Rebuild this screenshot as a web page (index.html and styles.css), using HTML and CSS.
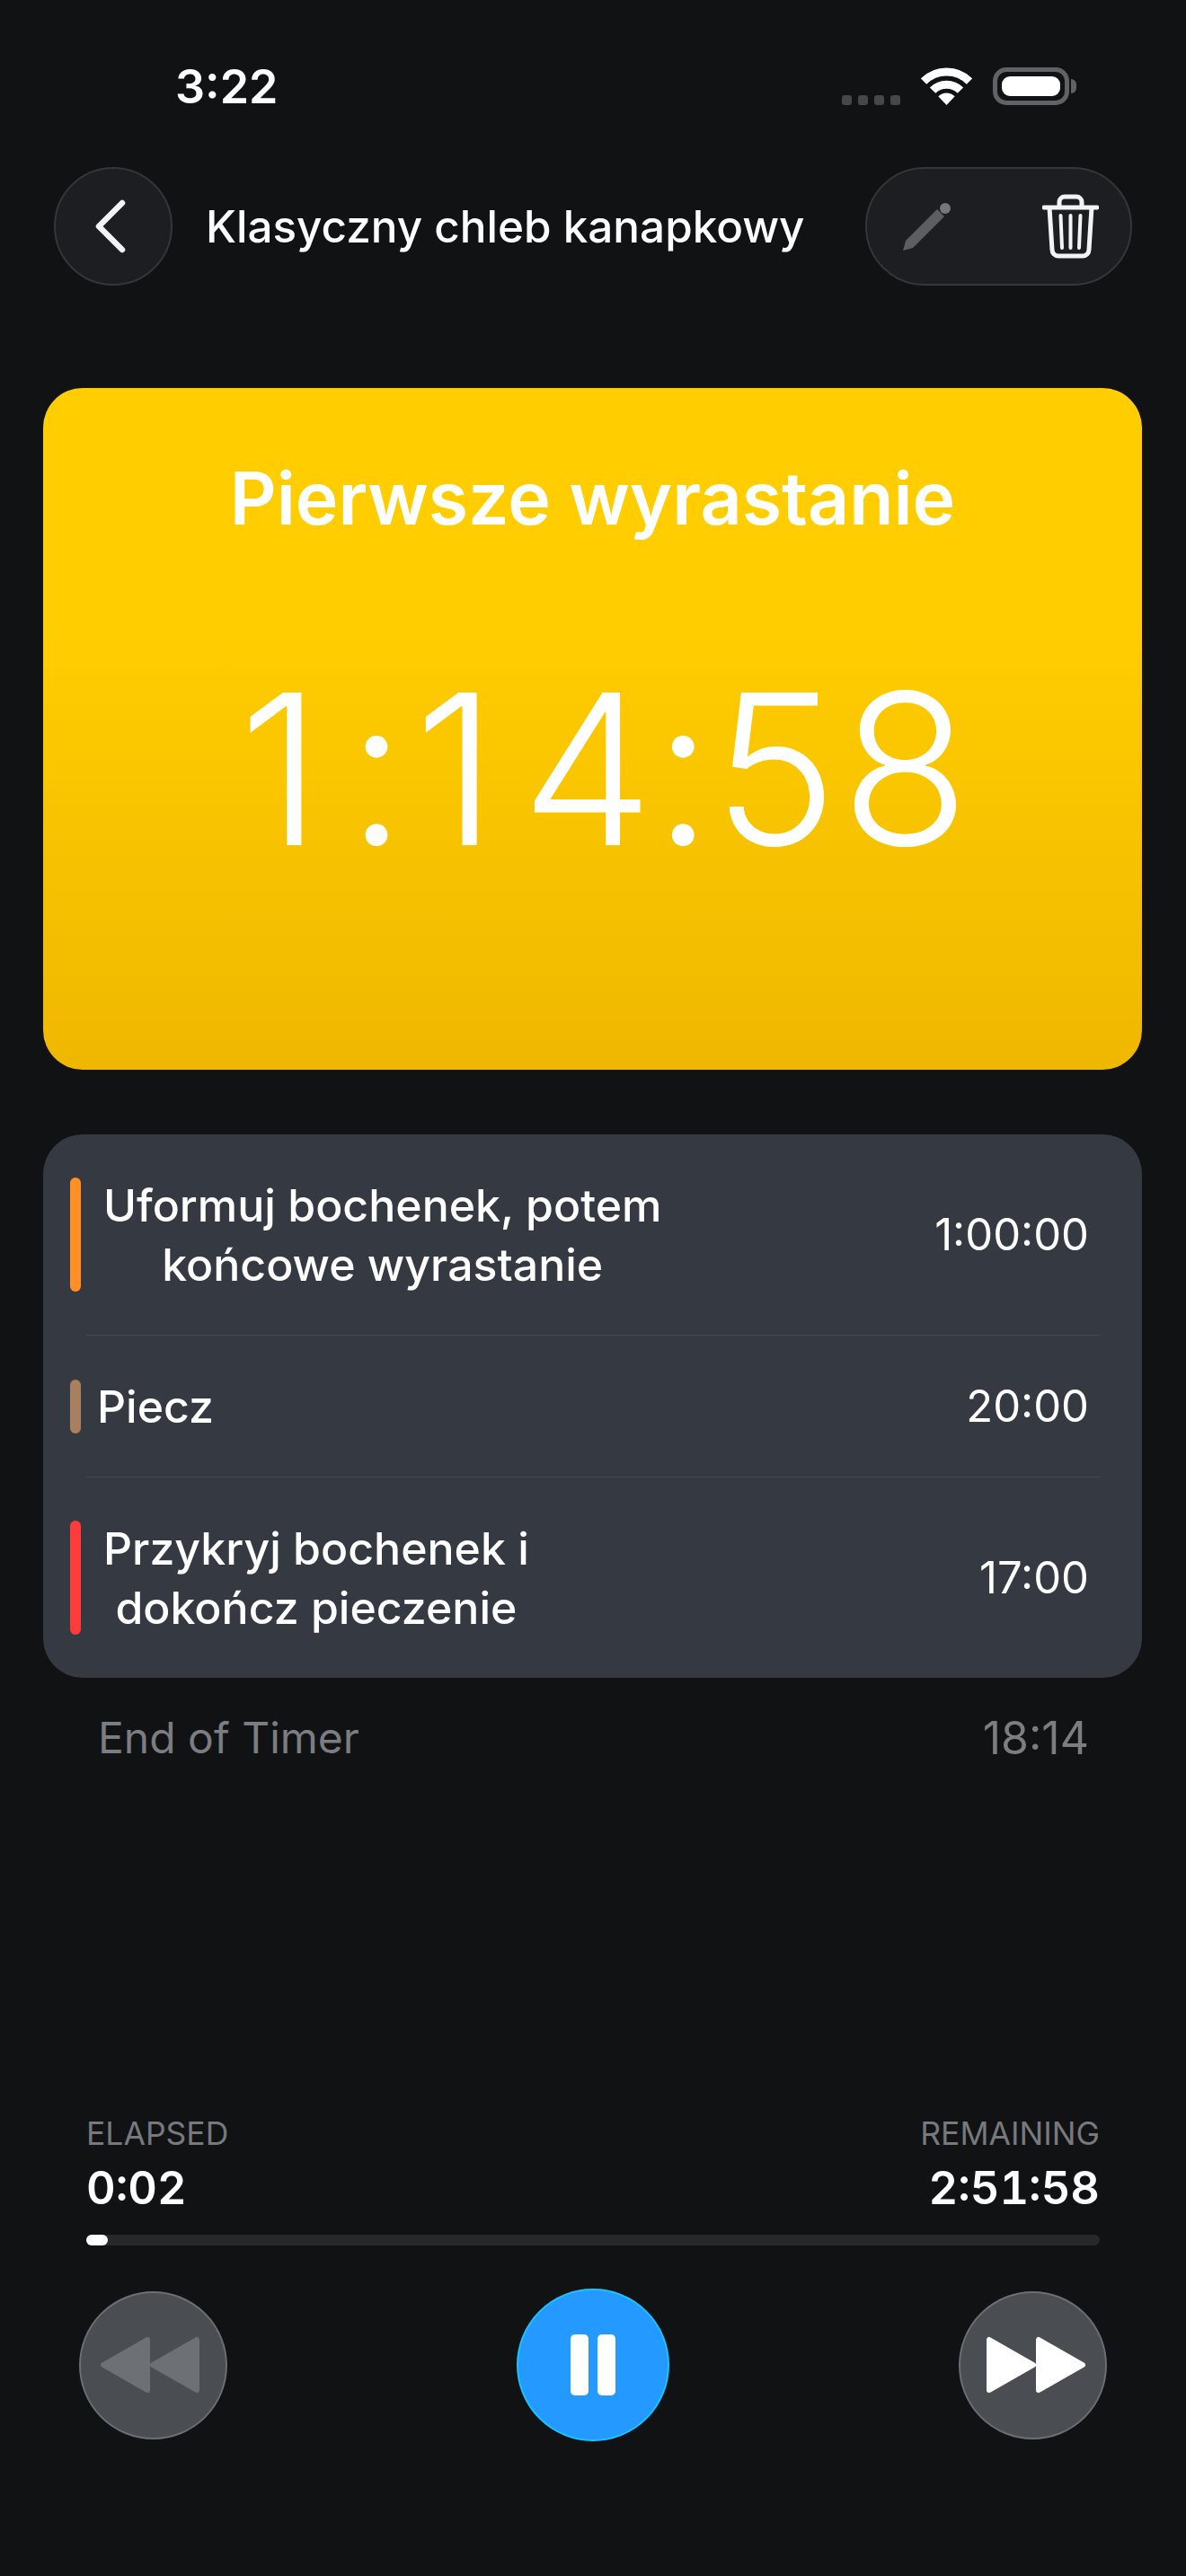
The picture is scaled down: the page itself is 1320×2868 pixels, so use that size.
FILE: index.html
```html
<!DOCTYPE html>
<html lang="pl">
  <head>
    <meta charset="UTF-8" />
    <meta name="viewport" content="width=device-width, initial-scale=1.0" />
    <title>Klasyczny chleb kanapkowy</title>
    <link rel="stylesheet" href="styles.css">
  </head>

  <body>
    <!-- Status bar -->
    <div class="status">
      <span class="clock">3:22</span>
      <div class="status-icons">
        <div class="signal"><span></span><span></span><span></span><span></span></div>
        <svg class="wifi" width="57" height="42" viewBox="0 0 57 42">
          <path d="M3 15.5A36 36 0 0 1 54 15.5M13.1 25.6A21.75 21.75 0 0 1 43.9 25.6" fill="none" stroke="#fff" stroke-width="9" />
          <path d="M28.5 42L19.3 32.3A13 13 0 0 1 37.7 32.3Z" fill="#fff" />
        </svg>
        <div class="battery"><div class="battery-fill"></div></div>
        <div class="battery-tip"></div>
      </div>
    </div>

    <!-- Top bar -->
    <header>
      <button class="back">
        <svg width="36" height="60" viewBox="0 0 36 60">
          <path d="M31 4L5 30L31 56" fill="none" stroke="#f2f3f5" stroke-width="6.5" stroke-linecap="round" stroke-linejoin="round" />
        </svg>
      </button>
      <h1>Klasyczny chleb kanapkowy</h1>
      <div class="actions">
        <svg width="53" height="53" viewBox="0 0 53 53">
          <path d="M0 53L3 42L38 7L46 15L11 50Z" fill="#5c5e61" />
          <circle cx="47" cy="6" r="6" fill="#757779" />
        </svg>
        <svg width="63" height="72" viewBox="0 0 63 72">
          <path d="M2 15H61" stroke="#f2f3f5" stroke-width="5" stroke-linecap="round" />
          <path d="M19 14V9a6 6 0 0 1 6-6H38a6 6 0 0 1 6 6V14" fill="none" stroke="#f2f3f5" stroke-width="5" />
          <path d="M8 15L11 62a7 7 0 0 0 7 7H45a7 7 0 0 0 7-7L55 15" fill="none" stroke="#f2f3f5" stroke-width="5" />
          <path d="M20.5 24L22 60M31.5 24V60M42.5 24L41 60" stroke="#f2f3f5" stroke-width="4" stroke-linecap="round" />
        </svg>
      </div>
    </header>

    <!-- Current step -->
    <section class="hero">
      <h2>Pierwsze wyrastanie</h2>
      <div class="countdown">
        <span>1</span><span>:</span><span>1</span><span>4</span><span>:</span><span>5</span><span>8</span>
      </div>
    </section>

    <!-- Next steps -->
    <section class="steps">
      <div class="step">
        <span class="bar bar-tall orange"></span>
        <span class="step-name">Uformuj bochenek, potem<br />końcowe wyrastanie</span>
        <span class="step-time">1:00:00</span>
      </div>
      <div class="sep"></div>
      <div class="step step-short">
        <span class="bar brown"></span>
        <span class="step-name piecz">Piecz</span>
        <span class="step-time">20:00</span>
      </div>
      <div class="sep"></div>
      <div class="step">
        <span class="bar bar-tall red"></span>
        <span class="step-name">Przykryj bochenek i<br />dokończ pieczenie</span>
        <span class="step-time">17:00</span>
      </div>
    </section>

    <div class="end-row">
      <span>End of Timer</span>
      <span class="end-time">18:14</span>
    </div>

    <!-- Player -->
    <footer>
      <div class="totals">
        <div>
          <div class="label">ELAPSED</div>
          <div class="value">0:02</div>
        </div>
        <div class="right">
          <div class="label">REMAINING</div>
          <div class="value">2:51:58</div>
        </div>
      </div>
      <div class="track"><div class="track-fill" style="width: 24px"></div></div>
      <div class="controls">
        <button class="round">
          <svg class="skip-back" width="112" height="64" viewBox="0 0 112 64">
            <path d="M5 32L54 4V60ZM60 32L109 4V60Z" fill="#6d7074" stroke="#6d7074" stroke-width="6" stroke-linejoin="round" />
          </svg>
        </button>
        <button class="round play">
          <span class="pause"></span><span class="pause"></span>
        </button>
        <button class="round">
          <svg class="skip-next" width="112" height="64" viewBox="0 0 112 64">
            <path d="M3 4V60L52 32ZM58 4V60L107 32Z" fill="#fff" stroke="#fff" stroke-width="6" stroke-linejoin="round" />
          </svg>
        </button>
      </div>
    </footer>
  </body>
</html>
```

FILE: styles.css
```css
* {
  box-sizing: border-box;
}

body {
  margin: 0;
  height: 2868px;
  display: flex;
  flex-direction: column;
  font-family: "Inter", "Liberation Sans", sans-serif;
  background: #101214;
  color: #fff;
}

button {
  border: none;
  padding: 0;
  display: flex;
  align-items: center;
  justify-content: center;
}

/* Status bar */
.status {
  height: 186px;
  padding: 70px 122px 0 195px;
  display: flex;
  justify-content: space-between;
  align-items: flex-start;
}

.clock {
  font-size: 52px;
  font-weight: 600;
  line-height: 54px;
}

.status-icons {
  display: flex;
  align-items: flex-end;
  padding-top: 5px;
}

.signal {
  display: flex;
  gap: 7px;
  margin-right: 23px;
}

.signal span {
  width: 11px;
  height: 11px;
  border-radius: 3px;
  background: #45474a;
}

.battery {
  width: 85px;
  height: 42px;
  margin-left: 23px;
  padding: 7px;
  border: 5px solid #606266;
  border-radius: 15px;
}

.battery-fill {
  margin: -2px;
  height: calc(100% + 4px);
  background: #fff;
  border-radius: 9px;
}

.battery-tip {
  width: 6px;
  height: 16px;
  margin: 0 0 13px 2px;
  background: #606266;
  border-radius: 0 8px 8px 0;
}

/* Top bar */
header {
  height: 132px;
  padding: 0 60px;
  display: flex;
  align-items: center;
}

.back {
  width: 132px;
  height: 132px;
  padding-right: 6px;
  border-radius: 50%;
  background: #1c1e22;
  border: 2px solid #33363a;
}

header h1 {
  flex: 1;
  margin: 0 0 0 37px;
  font-size: 49.4px;
  font-weight: 500;
}

.actions {
  width: 297px;
  height: 132px;
  padding: 0 35px 0 40px;
  display: flex;
  align-items: center;
  justify-content: space-between;
  border-radius: 66px;
  background: #1c1e22;
  border: 2px solid #33363a;
}

/* Current step */
.hero {
  height: 759px;
  margin: 114px 49px 0 48px;
  padding-top: 74px;
  text-align: center;
  border-radius: 44px;
  background: linear-gradient(#ffcd00 35%, #efb800);
}

.hero h2 {
  margin: 0;
  font-size: 80.6px;
  font-weight: 600;
  line-height: 97px;
}

.countdown {
  margin-top: 113px;
  padding-left: 26px;
  display: flex;
  justify-content: center;
  font-size: 234px;
  font-weight: 340;
  line-height: 280px;
}

/* digits are spaced by hand, the reference keeps them on a fixed pitch */
.countdown span:nth-child(1) {
  margin-right: 28px;
}

.countdown span:nth-child(2) {
  margin-right: 9px;
}

.countdown span:nth-child(3) {
  margin-right: 27px;
}

.countdown span:nth-child(6) {
  margin-right: 4px;
}

/* Next steps */
.steps {
  margin: 72px 49px 0 48px;
  border-radius: 44px;
  background: #353a42;
}

.step {
  height: 223px;
  padding: 0 60px 0 30px;
  display: flex;
  align-items: center;
}

.step-short {
  height: 157px;
}

.bar {
  width: 12px;
  height: 60px;
  margin-right: 20px;
  border-radius: 6px;
}

.bar-tall {
  height: 127px;
}

.orange {
  background: #ff8f26;
}

.brown {
  background: #a8805f;
}

.red {
  background: #ff3b3b;
}

.step-name {
  flex: 1;
  font-size: 50px;
  font-weight: 500;
  line-height: 66px;
}

.step-name:has(br) {
  flex: none;
  margin: 0 auto 0 5px;
  text-align: center;
}

.piecz {
  margin-left: -2px;
}

.step-time {
  margin-right: -1px;
  font-size: 49px;
}

.sep {
  height: 1px;
  margin: 0 46px 0 48px;
  background: rgba(255, 255, 255, 0.08);
}

.end-row {
  margin: 34px 108px 0 109px;
  display: flex;
  justify-content: space-between;
  font-size: 48px;
  line-height: 66px;
  color: #7b7d81;
}

.end-time {
  font-size: 50px;
}

/* Player */
footer {
  margin-top: auto;
  padding: 0 88px 150px;
}

.totals {
  padding: 0 8px;
  display: flex;
  justify-content: space-between;
}

.right {
  text-align: right;
}

.label {
  margin-top: 2px;
  font-size: 35.5px;
  line-height: 42px;
  color: #77797d;
}

.value {
  margin-top: 9px;
  font-size: 50.5px;
  font-weight: 600;
  line-height: 60px;
  font-variant-numeric: tabular-nums;
}

.track {
  height: 12px;
  margin: 22px 8px 0;
  border-radius: 6px;
  background: #26282c;
}

.track-fill {
  height: 100%;
  border-radius: 6px;
  background: #fff;
}

.controls {
  margin-top: 48px;
  display: flex;
  align-items: center;
  justify-content: space-between;
}

.round {
  width: 165px;
  height: 165px;
  border-radius: 50%;
  background: #4a4d52;
  border: 2px solid #6b6e73;
}

.skip-back {
  margin-right: 10px;
}

.skip-next {
  margin-left: 8px;
}

.play {
  width: 170px;
  height: 170px;
  gap: 10px;
  background: #2499ff;
  border-color: #19c5ff;
}

.pause {
  width: 20px;
  height: 68px;
  border-radius: 5px;
  background: #fff;
}
```
